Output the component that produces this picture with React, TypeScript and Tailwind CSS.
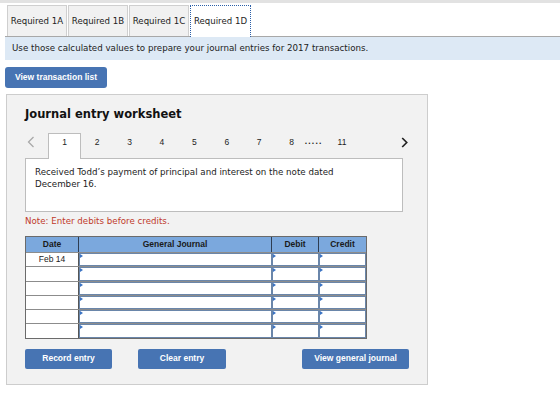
import React from "react";

const Cell = () => (
  <div className="relative h-full bg-white border-[1.5px] border-[#6a86aa]">
    <div className="absolute left-[0px] top-[0px] w-0 h-0 border-t-[2px] border-b-[2px] border-l-[3px] border-t-transparent border-b-transparent border-l-[#3a73c4]" />
  </div>
);

export default function App() {
  const rows = ["Feb 14", "", "", "", "", ""];
  return (
    <div className="w-[560px] h-[400px] bg-white overflow-hidden font-['DejaVu_Sans',sans-serif] text-[#222]">
      <div className="h-[3px] bg-[#e2e2e2]" />
      <div className="ml-[5px] mt-[2px] flex items-end pl-[2px] gap-[1px] border-b border-[#a8a8a8] h-[32px]">
        {["Required 1A", "Required 1B", "Required 1C"].map((t) => (
          <div key={t} className="h-[31px] w-[60px] flex items-center justify-center bg-[#f1f1f1] border border-b-0 border-[#cfcfcf] text-[8.6px]">
            {t}
          </div>
        ))}
        <div className="h-[32px] w-[61px] flex items-center justify-center bg-white border border-dotted border-b-0 border-[#2b5fa8] text-[8.6px] -mb-px">
          Required 1D
        </div>
      </div>
      <div className="ml-[5px] h-[23px] bg-[#dde9f5] flex items-center pl-[7px] text-[8.7px]">
        Use those calculated values to prepare your journal entries for 2017 transactions.
      </div>
      <div className="ml-[5px] mt-[7px] w-[102px] h-[21px] rounded-[3px] bg-[#4774b3] flex items-center justify-center text-white font-bold font-['Liberation_Sans',sans-serif] text-[8.5px]">
        View transaction list
      </div>
      <div className="ml-[6px] mt-[6px] w-[422px] h-[291px] bg-[#f2f2f2] border border-[#cdcdcd] pl-[18px]">
        <div className="mt-[12px] h-[16px] flex items-center font-bold text-[11.5px] text-[#111]">
          Journal entry worksheet
        </div>
        <div className="mt-[9px] flex items-end h-[26px] font-['Liberation_Sans',sans-serif] text-[8.5px] text-[#222]">
          <div className="w-[23px] h-[26px] flex items-start pt-[4px] pl-[2px]">
            <svg width="8" height="12" viewBox="0 0 8 12">
              <path d="M6.5 1 L1.5 6 L6.5 11" fill="none" stroke="#a9a9a9" strokeWidth="1.3" />
            </svg>
          </div>
          <div className="w-[33px] h-[26px] bg-white border border-b-0 border-[#bdbdbd] flex items-start pt-[2px] justify-center -mb-px relative z-10">1</div>
          {["2", "3", "4", "5", "6", "7", "8"].map((n) => (
            <div key={n} className="w-[32.4px] h-[26px] flex items-start pt-[4px] justify-center">{n}</div>
          ))}
          <div className="h-[26px] flex items-start pt-[3px] ml-[-3px]">
            <span className="tracking-[1.2px] font-bold">.....</span>
            <span className="ml-[15px] pt-[1px]">11</span>
          </div>
          <div className="ml-[55px] h-[26px] flex items-start pt-[5px]">
            <svg width="7" height="11" viewBox="0 0 7 11">
              <path d="M1.2 1 L5.7 5.5 L1.2 10" fill="none" stroke="#222" strokeWidth="1.7" />
            </svg>
          </div>
        </div>
        <div className="w-[378px] h-[54px] bg-white border border-[#bdbdbd] pl-[9px] pt-[7px] text-[8.7px] leading-[12px]">
          Received Todd’s payment of principal and interest on the note dated
          <br />
          December 16.
        </div>
        <div className="mt-[4px] h-[12px] flex items-center text-[8.7px] text-[#c03a2b]">
          Note: Enter debits before credits.
        </div>
        <div className="mt-[8px] w-[342px] border border-[#6b6b6b] font-['Liberation_Sans',sans-serif]">
          <div className="grid grid-cols-[53px_193px_47px_47px] h-[15px] bg-[#7ba8dd] text-[8.5px] font-bold text-[#1a1a1a]">
            <div className="flex items-center justify-center border-r-[1.5px] border-[#2e3d52]">Date</div>
            <div className="flex items-center justify-center border-r-[1.5px] border-[#2e3d52]">General Journal</div>
            <div className="flex items-center justify-center border-r-[1.5px] border-[#2e3d52]">Debit</div>
            <div className="flex items-center justify-center">Credit</div>
          </div>
          {rows.map((d, i) => (
            <div key={i} className="grid grid-cols-[53px_193px_47px_47px] h-[14.3px] border-t border-[#8c8c8c]">
              <div className="bg-white flex items-center justify-center text-[8.5px] border-r-[1.5px] border-[#555]">{d}</div>
              <Cell />
              <Cell />
              <Cell />
            </div>
          ))}
        </div>
        <div className="mt-[10px] flex font-['Liberation_Sans',sans-serif] text-white font-bold text-[8.5px]">
          <div className="w-[87px] h-[20px] bg-[#4774b3] rounded-[2px] flex items-center justify-center">Record entry</div>
          <div className="ml-[26px] w-[88px] h-[20px] bg-[#4774b3] rounded-[2px] flex items-center justify-center">Clear entry</div>
          <div className="ml-[76px] w-[107px] h-[20px] bg-[#4774b3] rounded-[2px] flex items-center justify-center">View general journal</div>
        </div>
      </div>
    </div>
  );
}
